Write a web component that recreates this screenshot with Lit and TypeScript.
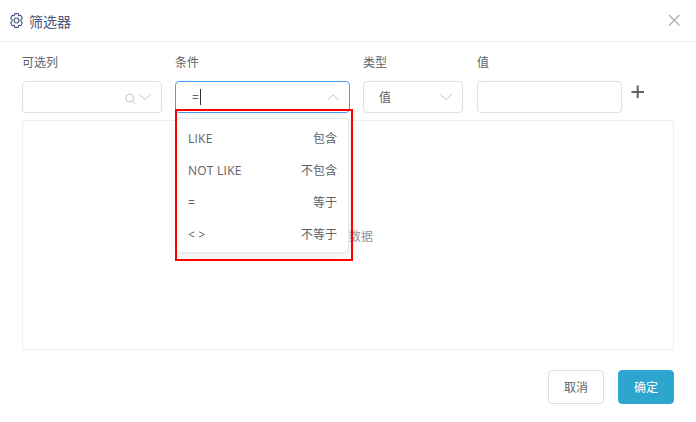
import { LitElement, html, css } from "lit";
import { customElement } from "lit/decorators.js";

const chevron = (up = false) => html`<svg class="chev" width="14" height="14" viewBox="0 0 14 14" fill="none" stroke="#c0c4cc" stroke-width="1"><path d=${up ? "M1.5 10 7 4.8 12.5 10" : "M1.5 4.5 7 9.7 12.5 4.5"}></path></svg>`;

@customElement("app-root")
export class AppRoot extends LitElement {
  static styles = css`
    :host { display: block; width: 696px; height: 422px; background: #fff; font-family: "Open Sans", "Noto Sans CJK SC", sans-serif; color: #606266; font-size: 12px; overflow: hidden; position: relative; }
    .head { box-sizing: border-box; border-bottom: 1px solid #ebeef5; display: flex; align-items: center; padding: 0 15px 0 9px; height: 42px; color: #47567f; font-size: 14px; gap: 5px; }
    .head .title { flex: 1; }
    .gear { margin-top: -1px; }
    .close { margin-top: -2px; }
    .body { padding: 0 22px; }
    .labels, .controls { display: grid; grid-template-columns: 140px 175px 100px 146px auto; column-gap: 13px; }
    .labels { height: 39px; align-items: center; padding-top: 1px; box-sizing: border-box; color: #606266; font-size: 12px; }
    .labels span:nth-child(4) { margin-left: 1px; }
    .controls { height: 32px; }
    .ctl { box-sizing: border-box; height: 32px; border: 1px solid #dcdfe6; border-radius: 4px; display: flex; align-items: center; background: #fff; position: relative; }
    .ctl.val { margin-left: 1px; }
    .ctl.focus { border-color: #409eff; padding-left: 16px; }
    .ctl.type { padding-left: 15px; }
    .grow { flex: 1; }
    .chev { margin-right: 9px; }
    .caret { width: 1px; height: 16px; background: #303133; margin-left: 1px; }
    .search { margin-right: 1px; margin-top: 4px; }
    .plus { display: flex; align-items: flex-start; margin-left: -4px; padding-top: 4px; }
    .table { box-sizing: border-box; margin-top: 7px; height: 230px; border: 1px solid #ebeef5; display: flex; align-items: center; justify-content: center; color: #909399; padding: 2px 0 0 2px; }
    .foot { display: flex; justify-content: flex-end; gap: 14px; padding-top: 20px; }
    .btn { box-sizing: border-box; width: 56px; height: 34px; border-radius: 4px; display: flex; align-items: center; justify-content: center; border: 1px solid #dcdfe6; background: #fff; color: #606266; font-size: 12px; }
    .btn.ok { background: #2ca6cf; border-color: #2ca6cf; color: #fff; }
    .drop { position: absolute; left: 176px; top: 118px; width: 173px; height: 135px; box-sizing: border-box; border: 1px solid #e4e7ed; border-radius: 4px; background: #fff; box-shadow: 0 2px 12px rgba(0,0,0,.1); padding: 3px 0 0; display: flex; flex-direction: column; }
    .opt { flex: none; height: 32px; display: flex; justify-content: space-between; align-items: center; padding: 0 11px; }
    .latin { letter-spacing: .25px; }
    .mark { position: absolute; left: 175px; top: 109px; width: 178px; height: 152px; box-sizing: border-box; border: 2px solid #f00; pointer-events: none; }
  `;

  render() {
    const opts = [["LIKE", "包含"], ["NOT LIKE", "不包含"], ["=", "等于"], ["< >", "不等于"]];
    return html`
      <div class="head">
        <svg class="gear" width="15" height="15" viewBox="1.500 1 13 14" fill="none" stroke="#47567f" stroke-width="1" stroke-linejoin="round"><path d="M6.400 1.600h3.200l.5 2 1.800-.6 1.600 2.800-1.400 1.400v1.600l1.400 1.400-1.600 2.800-1.800-.6-.5 2H6.400l-.5-2-1.800.6-1.600-2.800 1.400-1.400V7.200L2.500 5.800 4.100 3l1.800.6z"></path><circle cx="8" cy="8" r="2.300"></circle></svg>
        <span class="title">筛选器</span>
        <svg class="close" width="14" height="14" viewBox="0 0 14 14" stroke="#a4a9b3" stroke-width="1.100" fill="none"><path d="M2 2l10.500 10.500M12.500 2 2 12.500"></path></svg>
      </div>
      <div class="body">
        <div class="labels"><span>可选列</span><span>条件</span><span>类型</span><span>值</span></div>
        <div class="controls">
          <div class="ctl">
            <span class="grow"></span>
            <svg class="search" width="12" height="12" viewBox="0 0 12 12" fill="none" stroke="#c0c4cc" stroke-width="1"><circle cx="4.700" cy="5" r="3.900"></circle><path d="M7.500 7.800 10.300 10.500"></path></svg>
            ${chevron()}
          </div>
          <div class="ctl focus"><span>=</span><span class="caret"></span><span class="grow"></span>${chevron(true)}</div>
          <div class="ctl type"><span>值</span><span class="grow"></span>${chevron()}</div>
          <div class="ctl val"></div>
          <div class="plus"><svg width="14" height="14" viewBox="0 0 14 14" stroke="#606266" stroke-width="2" fill="none"><path d="M.500 7h12.500M6.700 .500V13"></path></svg></div>
        </div>
        <div class="table"><span>暂无数据</span></div>
        <div class="foot"><div class="btn">取消</div><div class="btn ok">确定</div></div>
      </div>
      <div class="drop">${opts.map(([a, b]) => html`<div class="opt"><span class="latin">${a}</span><span>${b}</span></div>`)}</div>
      <div class="mark"></div>
    `;
  }
}
